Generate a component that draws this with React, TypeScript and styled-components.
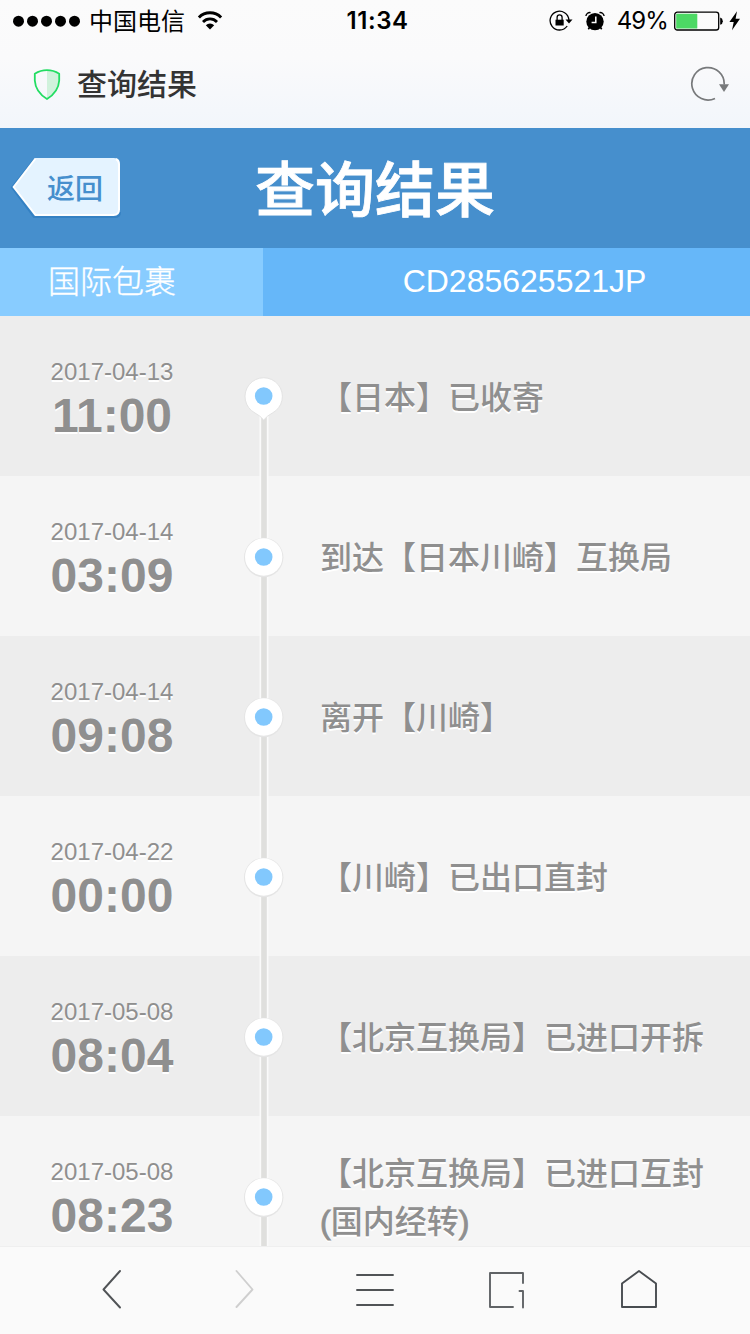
import React from 'react';
import styled, { createGlobalStyle } from 'styled-components';

const GlobalStyle = createGlobalStyle`
  body {
    margin: 0;
    overflow: hidden;
    font-family: "Liberation Sans", "Noto Sans CJK SC", sans-serif;
  }
`;

const Screen = styled.div`
  width: 750px;
  height: 1334px;
  display: flex;
  flex-direction: column;
  overflow: hidden;
  background: #f5f5f5;
`;

const Chrome = styled.header`
  flex: none;
  height: 128px;
  background: linear-gradient(#fbfbfb 0%, #fafafb 45%, #f2f6fb 100%);
`;

const StatusBar = styled.div`
  height: 40px;
  display: grid;
  grid-template-columns: 1fr auto 1fr;
  align-items: center;
  color: #000;
  font-family: Inter, "Noto Sans CJK SC", sans-serif;
  font-size: 24px;
  line-height: 40px;
`;

const StatusLeft = styled.div`
  display: flex;
  align-items: center;
  padding-left: 12px;
  height: 40px;
`;

const Carrier = styled.span`
  height: 40px;
  margin: 0 12px 0 7px;
  line-height: 37px;
  font-family: "Noto Sans CJK SC", sans-serif;
`;

const Clock = styled.span`
  font-weight: 600;
  font-size: 24px;
  line-height: 42px;
  letter-spacing: 0.6px;
  padding-left: 5px;
`;

const StatusRight = styled.div`
  display: flex;
  align-items: center;
  justify-content: flex-end;
  height: 40px;
  padding-right: 9px;
`;

const StatusIcon = styled.span<{ $gap: number }>`
  display: flex;
  margin-left: ${(p) => p.$gap}px;
`;

const Percent = styled.span`
  margin-left: 12px;
  font-size: 24px;
  line-height: 42px;
  letter-spacing: -0.9px;
`;

const TitleBar = styled.div`
  height: 88px;
  display: flex;
  align-items: center;
  box-sizing: border-box;
  padding: 0 20px 0 33px;
`;

const PageTitle = styled.span`
  flex: 1;
  height: 88px;
  margin-left: 16px;
  font-size: 30px;
  font-weight: 500;
  line-height: 85px;
  color: #333;
  font-family: "Noto Sans CJK SC", sans-serif;
`;

const Banner = styled.div`
  flex: none;
  height: 120px;
  display: grid;
  grid-template-columns: 160px 1fr 160px;
  align-items: center;
  background: #468fcd;
`;

const BackButton = styled.a`
  display: grid;
  width: 112px;
  height: 62px;
  margin-left: 10px;

  & > * {
    grid-area: 1 / 1;
  }
`;

const BackLabel = styled.span`
  padding-left: 37px;
  font-size: 28px;
  line-height: 60px;
  font-weight: 500;
  color: #468fcd;
  font-family: "Noto Sans CJK SC", sans-serif;
  z-index: 1;
`;

const Heading = styled.h1`
  height: 120px;
  margin: 0;
  text-align: center;
  font-family: "Noto Sans CJK SC", sans-serif;
  font-size: 60px;
  line-height: 115px;
  font-weight: 500;
  -webkit-text-stroke: 0.8px #fff;
  color: #fff;
`;

const Summary = styled.div`
  flex: none;
  display: flex;
  height: 68px;
  line-height: 66px;
  font-size: 32px;
  color: #fff;
`;

const ParcelType = styled.div`
  width: 263px;
  box-sizing: border-box;
  padding-left: 48px;
  font-weight: 300;
  line-height: 62px;
  -webkit-text-stroke: 0.35px #fff;
  font-family: "Noto Sans CJK SC", sans-serif;
  background: #88ccff;
`;

const TrackingNumber = styled.div`
  flex: 1;
  padding-left: 36px;
  text-align: center;
  background: #66b7f9;
`;

const Timeline = styled.ol`
  flex: 1;
  min-height: 0;
  margin: 0;
  padding: 0;
  overflow: hidden;
  list-style: none;
`;

const Event = styled.li`
  display: grid;
  grid-template-columns: 224px 80px 1fr;
  height: 160px;
  color: #8f8f8f;
  text-shadow: 0 2px 0 #fff;

  &:nth-child(odd) {
    background: #ededed;
  }
  &:nth-child(even) {
    background: #f5f5f5;
  }
`;

const Moment = styled.time`
  display: flex;
  flex-direction: column;
  align-items: center;
  padding-top: 40px;
`;

const Day = styled.span`
  font-size: 24px;
  line-height: 32px;
`;

const Hour = styled.span`
  font-size: 48px;
  line-height: 56px;
  font-weight: 700;
`;

const Description = styled.div`
  align-self: center;
  width: 390px;
  padding: 3px 0 0 16px;
  font-family: "Liberation Sans", "Noto Sans CJK SC", sans-serif;
  font-size: 32px;
  line-height: 48px;
  font-weight: 500;
`;

const Latin = styled.span`
  -webkit-text-stroke: 0.9px #8f8f8f;
`;

const Toolbar = styled.nav`
  flex: none;
  box-sizing: border-box;
  height: 88px;
  padding-bottom: 3px;
  display: grid;
  grid-template-columns: repeat(5, 132px);
  justify-content: center;
  align-items: center;
  border-top: 1px solid #efefef;
  background: #fafafa;
`;

const Tool = styled.a`
  display: flex;
  justify-content: center;
`;

type Stop = { day: string; hour: string; text: string; latin?: [string, string, string] };

const stops: Stop[] = [
  { day: '2017-04-13', hour: '11:00', text: '【日本】已收寄' },
  { day: '2017-04-14', hour: '03:09', text: '到达【日本川崎】互换局' },
  { day: '2017-04-14', hour: '09:08', text: '离开【川崎】' },
  { day: '2017-04-22', hour: '00:00', text: '【川崎】已出口直封' },
  { day: '2017-05-08', hour: '08:04', text: '【北京互换局】已进口开拆' },
  { day: '2017-05-08', hour: '08:23', text: '【北京互换局】已进口互封', latin: ['(', '国内经转', ')'] },
];

const Signal = () => (
  <svg width="70" height="12">
    {[6.5, 20.5, 34.5, 48.5, 62.5].map((x) => (
      <circle key={x} cx={x} cy="6.2" r="5.5" />
    ))}
  </svg>
);

const Wifi = () => (
  <svg width="26" height="20" viewBox="0 0.600 26 20" fill="none" stroke="#000">
    <path d="M1.9 7.1a15.6 15.6 0 0 1 22.2 0" strokeWidth="3" />
    <path d="M6 11.5a9.8 9.8 0 0 1 14 0" strokeWidth="2.8" />
    <path d="M13 19l-4.2-4.2a6 6 0 0 1 8.4 0z" fill="#000" stroke="none" />
  </svg>
);

const RotationLock = () => (
  <svg width="24" height="22" viewBox="0 0 24 22">
    <path d="M18.2 16A9.4 9.4 0 1 1 19.900 10" fill="none" stroke="#000" strokeWidth="1.3" />
    <path d="M16.5 9.6h7l-3.5 3.800z" />
    <path d="M6.500 9.700h8.200v5.800H6.500z" />
    <path d="M8.100 10V7.400a2.500 2.500 0 0 1 5 0V10" fill="none" stroke="#000" strokeWidth="1.3" />
  </svg>
);

const Alarm = () => (
  <svg width="20" height="20" viewBox="0 0 20 20">
    <circle cx="10" cy="10.600" r="8.700" />
    <path d="M.9 5A4 4 0 0 1 5.600 1.600M19.100 5A4 4 0 0 0 14.400 1.600" fill="none" stroke="#000" strokeWidth="1.400" />
    <path d="M4.500 16.500L3.300 18.300M15.500 16.500l1.200 1.800" stroke="#000" strokeWidth="1.600" />
    <path d="M10.800 5.600v6H6.600" fill="none" stroke="#fff" strokeWidth="1.500" />
  </svg>
);

const Battery = () => (
  <svg width="50" height="20" viewBox="0 0 50 20">
    <rect x=".7" y="1.200" width="44" height="17.800" rx="2.600" fill="none" stroke="#000" strokeWidth="1.300" />
    <rect x="2.200" y="2.800" width="21.100" height="14.800" rx=".6" fill="#4cd964" />
    <path d="M46.200 6.600q2.600.8 2.600 3.600t-2.600 3.500z" />
  </svg>
);

const Bolt = () => (
  <svg width="12" height="20" viewBox="0 0 12 20">
    <path d="M8 .2L.4 11h4.300L3 19.300l8-11.500H6.600z" />
  </svg>
);

const Shield = () => (
  <svg width="28" height="32" viewBox="0 0 28 32">
    <path d="M14 2.500Q20 2.500 26 6V13.500q-.8 10-12 17z" fill="#d0f2dc" />
    <path
      d="M14 2.200Q20.500 2.200 26.200 5.800V12.500Q25.500 24 14 31Q2.500 24 1.800 12.500V5.800Q7.500 2.200 14 2.200z"
      fill="none"
      stroke="#22dd62"
      strokeWidth="1.8"
      strokeLinejoin="round"
    />
  </svg>
);

const Reload = () => (
  <svg width="40" height="36" viewBox="0 0 40 36">
    <path d="M25 32.400A16.200 16.200 0 1 1 34.200 18.500" fill="none" stroke="#77797b" strokeWidth="1.700" />
    <path d="M29 18.200h10l-5 7.800z" fill="#77797b" />
  </svg>
);

const BackShape = () => (
  <svg width="112" height="62" viewBox="0 0 112 62">
    <path d="M24 2.500L2 30.500 24 60H104.500q5.500 0 5.500-5" fill="none" stroke="#2f7dc1" strokeOpacity=".8" strokeWidth="2" />
    <path
      d="M25.500 1H103.500q5.500 0 5.500 5.500V52.500q0 5.500-5.500 5.500H25.500L3.500 30z"
      fill="#e4f3ff"
    />
    <path
      d="M25.500 1.500L3.700 30 25.500 58H103.500q5.500 0 5.500-5.500V7q0-3.500-3-5"
      fill="none"
      stroke="#fff"
      strokeWidth="2"
    />
  </svg>
);

const Node = ({ first }: { first: boolean }) => (
  <svg width="80" height="160" viewBox="0 0 80 160">
    <path d={first ? 'M35.500 96V160h9V96z' : 'M35.500 0V160h9V0z'} fill="#fafafa" />
    <path d={first ? 'M37.200 96V160h5.600V96z' : 'M37.200 0V160h5.600V0z'} fill="#dfdfdd" />
    {first ? (
      <path
        d="M39.700 104Q36 99.500 31 97A18.700 18.700 0 1 1 48.400 97Q43.400 99.500 39.700 104z"
        fill="#fff"
        stroke="#e3e3e3"
        strokeWidth="1"
      />
    ) : (
      <>
        <circle cx="39.700" cy="81.500" r="19.700" fill="#e5e5e5" />
        <circle cx="39.700" cy="81" r="18.700" fill="#fff" />
      </>
    )}
    <circle cx="39.700" cy={first ? 80 : 81} r="8.800" fill="#82c8fd" />
  </svg>
);

const toolIcons = [
  <path key="prev" d="M29 2L12.500 20.500 29 38.500" stroke="#505356" />,
  <path key="next" d="M13.500 2L29.500 20.500 13.500 38" stroke="#cfcfcf" />,
  <path key="menu" d="M2 6H38M2 21H38M2 36H38" stroke="#505356" />,
  <path key="tabs" d="M36 14V4H3V38H26M32.500 22H36V38.500" stroke="#606366" />,
  <path key="home" d="M3 14.500L20 2 37 14.500V38H3z" stroke="#484c50" />,
];

export default function App() {
  return (
    <>
      <GlobalStyle />
      <Screen>
        <Chrome>
          <StatusBar>
            <StatusLeft>
              <Signal />
              <Carrier>中国电信</Carrier>
              <Wifi />
            </StatusLeft>
            <Clock>11:34</Clock>
            <StatusRight>
              <StatusIcon $gap={0}>
                <RotationLock />
              </StatusIcon>
              <StatusIcon $gap={12}>
                <Alarm />
              </StatusIcon>
              <Percent>49%</Percent>
              <StatusIcon $gap={6}>
                <Battery />
              </StatusIcon>
              <StatusIcon $gap={5}>
                <Bolt />
              </StatusIcon>
            </StatusRight>
          </StatusBar>
          <TitleBar>
            <Shield />
            <PageTitle>查询结果</PageTitle>
            <Reload />
          </TitleBar>
        </Chrome>
        <Banner>
          <BackButton>
            <BackShape />
            <BackLabel>返回</BackLabel>
          </BackButton>
          <Heading>查询结果</Heading>
        </Banner>
        <Summary>
          <ParcelType>国际包裹</ParcelType>
          <TrackingNumber>CD285625521JP</TrackingNumber>
        </Summary>
        <Timeline>
          {stops.map((s, i) => (
            <Event key={s.hour}>
              <Moment>
                <Day>{s.day}</Day>
                <Hour>{s.hour}</Hour>
              </Moment>
              <Node first={i === 0} />
              <Description>
                {s.text}
                {s.latin && (
                  <>
                    <br />
                    <Latin>{s.latin[0]}</Latin>
                    {s.latin[1]}
                    <Latin>{s.latin[2]}</Latin>
                  </>
                )}
              </Description>
            </Event>
          ))}
        </Timeline>
        <Toolbar>
          {toolIcons.map((icon) => (
            <Tool key={icon.key}>
              <svg width="40" height="40" viewBox="0 0 40 40" fill="none" strokeWidth="1.900" strokeLinecap="round" strokeLinejoin="round">
                {icon}
              </svg>
            </Tool>
          ))}
        </Toolbar>
      </Screen>
    </>
  );
}
